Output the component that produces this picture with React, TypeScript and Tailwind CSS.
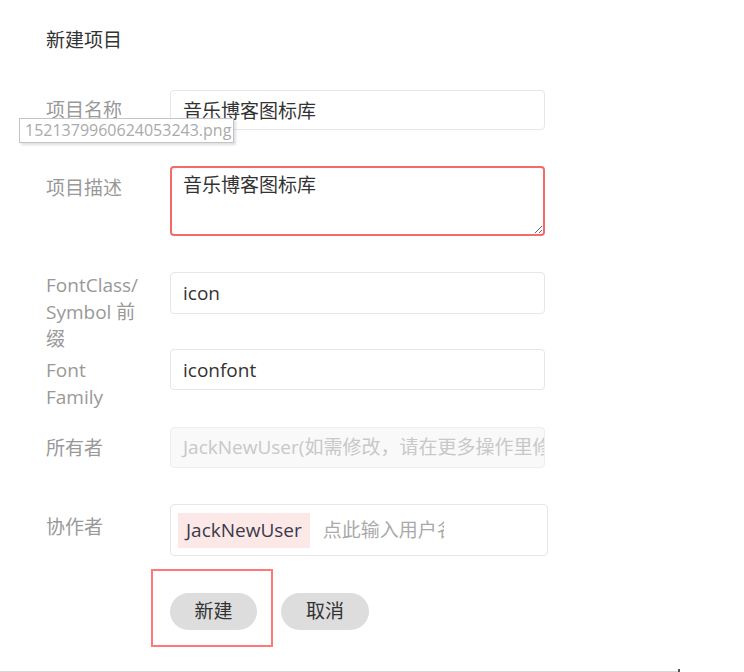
import React from "react";

const font = "font-['Open_Sans','Noto_Sans_CJK_SC',sans-serif]";

function Label({ children, pt }: { children: React.ReactNode; pt: string }) {
  return (
    <div className={`w-[124px] shrink-0 text-[19px] leading-[27px] text-[#999] whitespace-nowrap ${pt}`}>
      {children}
    </div>
  );
}

export default function App() {
  return (
    <div className={`relative w-[744px] h-[672px] bg-white flex flex-col overflow-hidden ${font}`}>
      <div className="pl-[46px] pt-[27px] flex flex-col">
        <div className="text-[19px] leading-[27px] text-[#333]">新建项目</div>

        <div className="mt-[36px] flex h-[76px]">
          <Label pt="pt-[7px]">项目名称</Label>
          <input
            readOnly
            value="音乐博客图标库"
            className="w-[375px] h-[40px] border border-[#e6e6e6] rounded-[4px] px-[12px] text-[19px] text-[#333] outline-none"
          />
        </div>

        <div className="flex h-[106px]">
          <Label pt="pt-[9px]">项目描述</Label>
          <textarea
            readOnly
            value="音乐博客图标库"
            className="w-[375px] h-[70px] border-2 border-[#f46a6a] rounded-[4px] pl-[11px] pt-[4px] text-[19px] leading-[27px] text-[#333] outline-none"
          />
        </div>

        <div className="flex h-[77px]">
          <Label pt="pt-0">
            FontClass/
            <br />
            Symbol 前
            <br />
            缀
          </Label>
          <input
            readOnly
            value="icon"
            className="w-[375px] h-[42px] border border-[#e6e6e6] rounded-[4px] px-[12px] text-[19px] text-[#333] outline-none"
          />
        </div>

        <div className="flex h-[78px]">
          <Label pt="pt-[8px]">
            Font
            <br />
            Family
          </Label>
          <input
            readOnly
            value="iconfont"
            className="w-[375px] h-[41px] border border-[#e6e6e6] rounded-[4px] px-[12px] text-[19px] text-[#333] outline-none"
          />
        </div>

        <div className="flex h-[77px]">
          <Label pt="pt-[8px]">所有者</Label>
          <div className="w-[375px] h-[41px] border border-[#eeeeee] bg-[#f9f9f9] rounded-[4px] pl-[12px] flex items-center overflow-hidden whitespace-nowrap text-[19px] text-[#c8c8c8]">
            JackNewUser(如需修改，请在更多操作里修改)
          </div>
        </div>

        <div className="flex h-[65px]">
          <Label pt="pt-[10px]">协作者</Label>
          <div className="w-[378px] h-[52px] border border-[#e6e6e6] rounded-[4px] pl-[7px] flex items-center">
            <div className="h-[35px] px-[8px] bg-[#fde8e8] flex items-center text-[19px] text-[#3a3a4a]">
              JackNewUser
            </div>
            <div className="ml-[13px] w-[121px] overflow-hidden whitespace-nowrap text-[19px] text-[#aaa]">
              点此输入用户名
            </div>
          </div>
        </div>

        <div className="flex items-start">
          <div className="ml-[105px] w-[122px] h-[78px] border-2 border-[#f77] pl-[17px] pt-[22px]">
            <button className="w-[87px] h-[37px] rounded-full bg-[#dddddd] text-[19px] text-[#333]">新建</button>
          </div>
          <button className="ml-[8px] mt-[24px] w-[88px] h-[37px] rounded-full bg-[#dddddd] text-[19px] text-[#333]">取消</button>
        </div>
      </div>

      <div className="mt-auto mb-0 flex items-end">
        <div className="w-[678px] h-px bg-[#d8d8d8]" />
        <div className="w-[2px] h-[3px] bg-[#555]" />
      </div>

      <div className="absolute left-[19px] top-[118px] w-[215px] h-[25px] border border-[#c4c4c4] bg-white pl-[5px] text-[16px] leading-[23px] text-[#aaa] shadow-[2px_2px_2px_rgba(0,0,0,0.12)] font-['Open_Sans',sans-serif]">
        1521379960624053243.png
      </div>
    </div>
  );
}
